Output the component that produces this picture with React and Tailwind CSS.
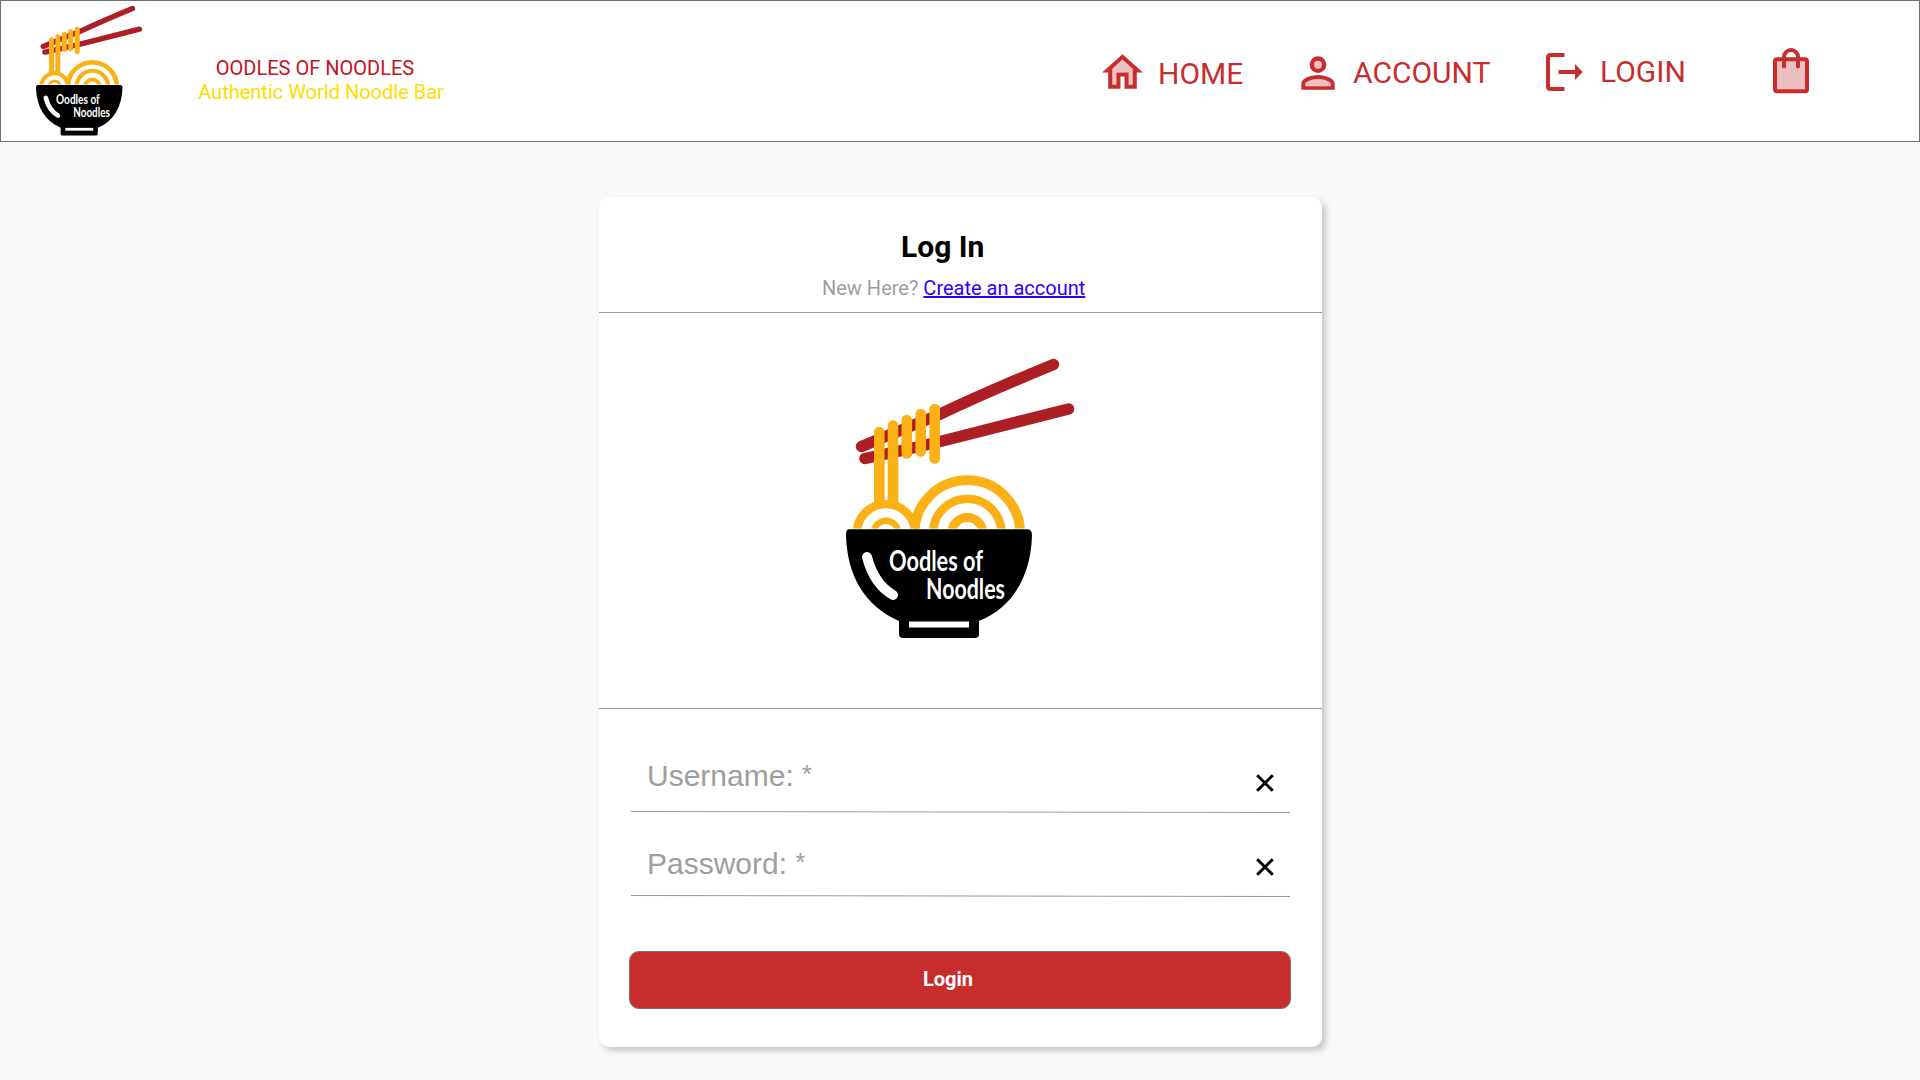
import React from "react";

const RED = "#c82d2e";

function BowlLogo({ className, id }) {
  return (
    <svg className={className} viewBox="0 0 232 284" fill="none">
      <clipPath id={id}>
        <path d="M0 0H232V173.400H0Z" />
      </clipPath>
      <g stroke="#ad1f25" strokeWidth="11.5" strokeLinecap="round">
        <path d="M17.500 91.500Q52 77 92 61Q145 36 209.500 9.500" />
        <path d="M21 103.500Q75 92 112 82.500L224.500 54" />
      </g>
      <g clipPath={`url(#${id})`} stroke="#fbb116">
        <g strokeWidth="10.6" strokeLinecap="round">
          <path d="M35.300 77V152" />
          <path d="M49 70.500V152" />
          <path d="M62.800 65V98.500" />
          <path d="M76.700 59V96.500" />
          <path d="M90.700 54V103.500" />
        </g>
        <circle cx="123.300" cy="178" r="52.800" strokeWidth="9.800" />
        <circle cx="123.300" cy="178" r="34.200" strokeWidth="8.600" />
        <circle cx="123.300" cy="178" r="15.500" strokeWidth="9" />
        <circle cx="42" cy="178" r="29" strokeWidth="8.600" fill="#fff" />
        <circle cx="42" cy="178" r="12.300" strokeWidth="6.400" />
      </g>
      <path d="M5 174.300H183Q188 174.300 188 180C187 221 169 252 135 266V279Q135 283 131 283H59Q55 283 55 279V266C21 251 3 221 2 180Q2 174.300 5 174.300Z" fill="#000" />
      <path d="M65 266.500h60v6H65z" fill="#fff" />
      <path d="M23 202Q30 229 49 240" stroke="#fff" strokeWidth="10" strokeLinecap="round" />
      <g fill="#fff" className="font-['Lato',sans-serif] font-bold" fontSize="28">
        <text x="45" y="215.500" textLength="94" lengthAdjust="spacingAndGlyphs">Oodles of</text>
        <text x="82" y="243.500" textLength="79" lengthAdjust="spacingAndGlyphs">Noodles</text>
      </g>
    </svg>
  );
}

function HomeIcon() {
  return (
    <svg className="size-[49px]" viewBox="0 0 24 24" fill={RED}>
      <path opacity=".3" d="M7 10.190V18h2v-6h6v6h2v-7.810l-5-4.500z" />
      <path d="M12 3 2 12h3v8h6v-6h2v6h6v-8h3L12 3zm5 15h-2v-6H9v6H7v-7.810l5-4.500 5 4.500V18z" />
    </svg>
  );
}

function PersonIcon() {
  return (
    <svg className="size-[50px]" viewBox="0 0 24 24" fill={RED}>
      <path opacity=".3" d="M12 14.900c-2.970 0-6.100 1.460-6.100 2.100v1.300h12.200V17c0-.64-3.130-2.100-6.100-2.100z" />
      <circle opacity=".3" cx="12" cy="8" r="1.900" />
      <path d="M12 4a4 4 0 1 0 0 8 4 4 0 0 0 0-8zm0 5.900a1.900 1.900 0 1 1 0-3.800 1.900 1.900 0 0 1 0 3.800zM12 13c-2.670 0-8 1.340-8 4v3h16v-3c0-2.660-5.330-4-8-4zm6.100 5.300H5.900V17c0-.64 3.130-2.100 6.100-2.100s6.100 1.460 6.100 2.100v1.300z" />
    </svg>
  );
}

function LogoutIcon() {
  return (
    <svg className="h-[38px] w-[37px]" viewBox="0 0 37 38">
      <path d="M18.500 2H4.500Q2 2 2 4.500V33.500Q2 36 4.500 36H18.500" fill="none" stroke={RED} strokeWidth="4" />
      <path d="M12.500 17H29V11L36.700 19 29 27V21H12.500Z" fill={RED} />
    </svg>
  );
}

function BagIcon() {
  return (
    <svg className="h-[46px] w-9" viewBox="0 0 36 46" fill="none">
      <rect x="2" y="11.300" width="32" height="32" rx="2" fill="#eebfc0" stroke={RED} strokeWidth="4" />
      <path d="M11 18.500V9a7 7 0 0 1 14 0v9.500" stroke={RED} strokeWidth="4" strokeLinecap="round" />
    </svg>
  );
}

function ClearIcon() {
  return (
    <svg className="size-[18px]" viewBox="0 0 18 18" stroke="#000" strokeWidth="3">
      <path d="M1.200 1.200 16.800 16.800M16.800 1.200 1.200 16.800" />
    </svg>
  );
}

function Field({ label, className, labelClass, iconClass }) {
  return (
    <div className={className}>
      <div className="flex h-full items-start justify-between pl-4 pr-4">
        <span className={labelClass}>
          {label} <span className="relative -top-[3px] text-[25px] leading-none">*</span>
        </span>
        <button className={iconClass}><ClearIcon /></button>
      </div>
      <svg className="block h-[3px] w-full shrink-0" viewBox="0 0 659 3" preserveAspectRatio="none">
        <path d="M0 .5 659 1.500" stroke="#999" strokeWidth="1" />
      </svg>
    </div>
  );
}

export default function App() {
  return (
    <div className="flex h-[1080px] w-[1920px] flex-col overflow-hidden bg-[#f9f9f9] font-['Roboto',sans-serif]">
      <header className="flex h-[142px] shrink-0 border border-[#707070] bg-white">
        <BowlLogo id="noodles-header" className="ml-[34px] mt-[3px] h-[132px] w-[108px]" />
        <div className="ml-[55px] mt-[55px] w-[246px] text-center text-[20px] leading-6">
          <div className="-ml-[12px] whitespace-nowrap text-[#c41220]">OODLES OF NOODLES</div>
          <div className="whitespace-nowrap text-[#ffdd00]">Authentic World Noodle Bar</div>
        </div>
        <nav className="ml-auto flex text-[30px] leading-9 text-[#c82d2e]">
          <a className="flex w-[195px]"><span className="mt-[47px]"><HomeIcon /></span><span className="ml-[11px] mt-[55px]">HOME</span></a>
          <a className="flex w-[253px]"><span className="mt-[47px]"><PersonIcon /></span><span className="ml-[10px] mt-[54px]">ACCOUNT</span></a>
          <a className="flex w-[227px]"><span className="mt-[52px]"><LogoutIcon /></span><span className="ml-[17px] mt-[53px]">LOGIN</span></a>
          <a className="mr-[110px] mt-[47px]"><BagIcon /></a>
        </nav>
      </header>
      <main className="ml-[599px] mt-[55px] flex h-[850px] w-[723px] shrink-0 flex-col rounded-[10px] bg-white shadow-[4px_4px_6px_rgba(0,0,0,0.200)]">
        <div className="h-[116px] shrink-0 border-b border-[#999]">
          <h1 className="ml-[302px] mt-[32px] text-[30px] font-bold leading-9">Log In</h1>
          <p className="ml-[223px] mt-[11px] text-[20px] leading-6 text-[#9e9e9e]">
            New Here? <a className="text-[#2a00ff] underline">Create an account</a>
          </p>
        </div>
        <div className="h-[396px] shrink-0 border-b border-[#999]">
          <BowlLogo id="noodles-card" className="ml-[245px] mt-[42px] h-[284px] w-[232px]" />
        </div>
        <Field
          label="Username:"
          className="ml-8 flex h-[105px] w-[659px] flex-col"
          labelClass="mt-[49px] font-['Liberation_Sans',sans-serif] text-[30px] leading-9 text-[#9e9e9e]"
          iconClass="mt-[65px]"
        />
        <Field
          label="Password:"
          className="ml-8 flex h-[84px] w-[659px] flex-col"
          labelClass="mt-[32px] font-['Liberation_Sans',sans-serif] text-[30px] leading-9 text-[#9e9e9e]"
          iconClass="mt-[44px]"
        />
        <button className="ml-[30px] mt-[53px] flex h-[58px] w-[662px] items-center justify-center rounded-[10px] border border-[#707070] bg-[#c82d2e] pb-[2px] pr-[24px] text-[20px] font-bold leading-6 text-white">
          Login
        </button>
      </main>
    </div>
  );
}
